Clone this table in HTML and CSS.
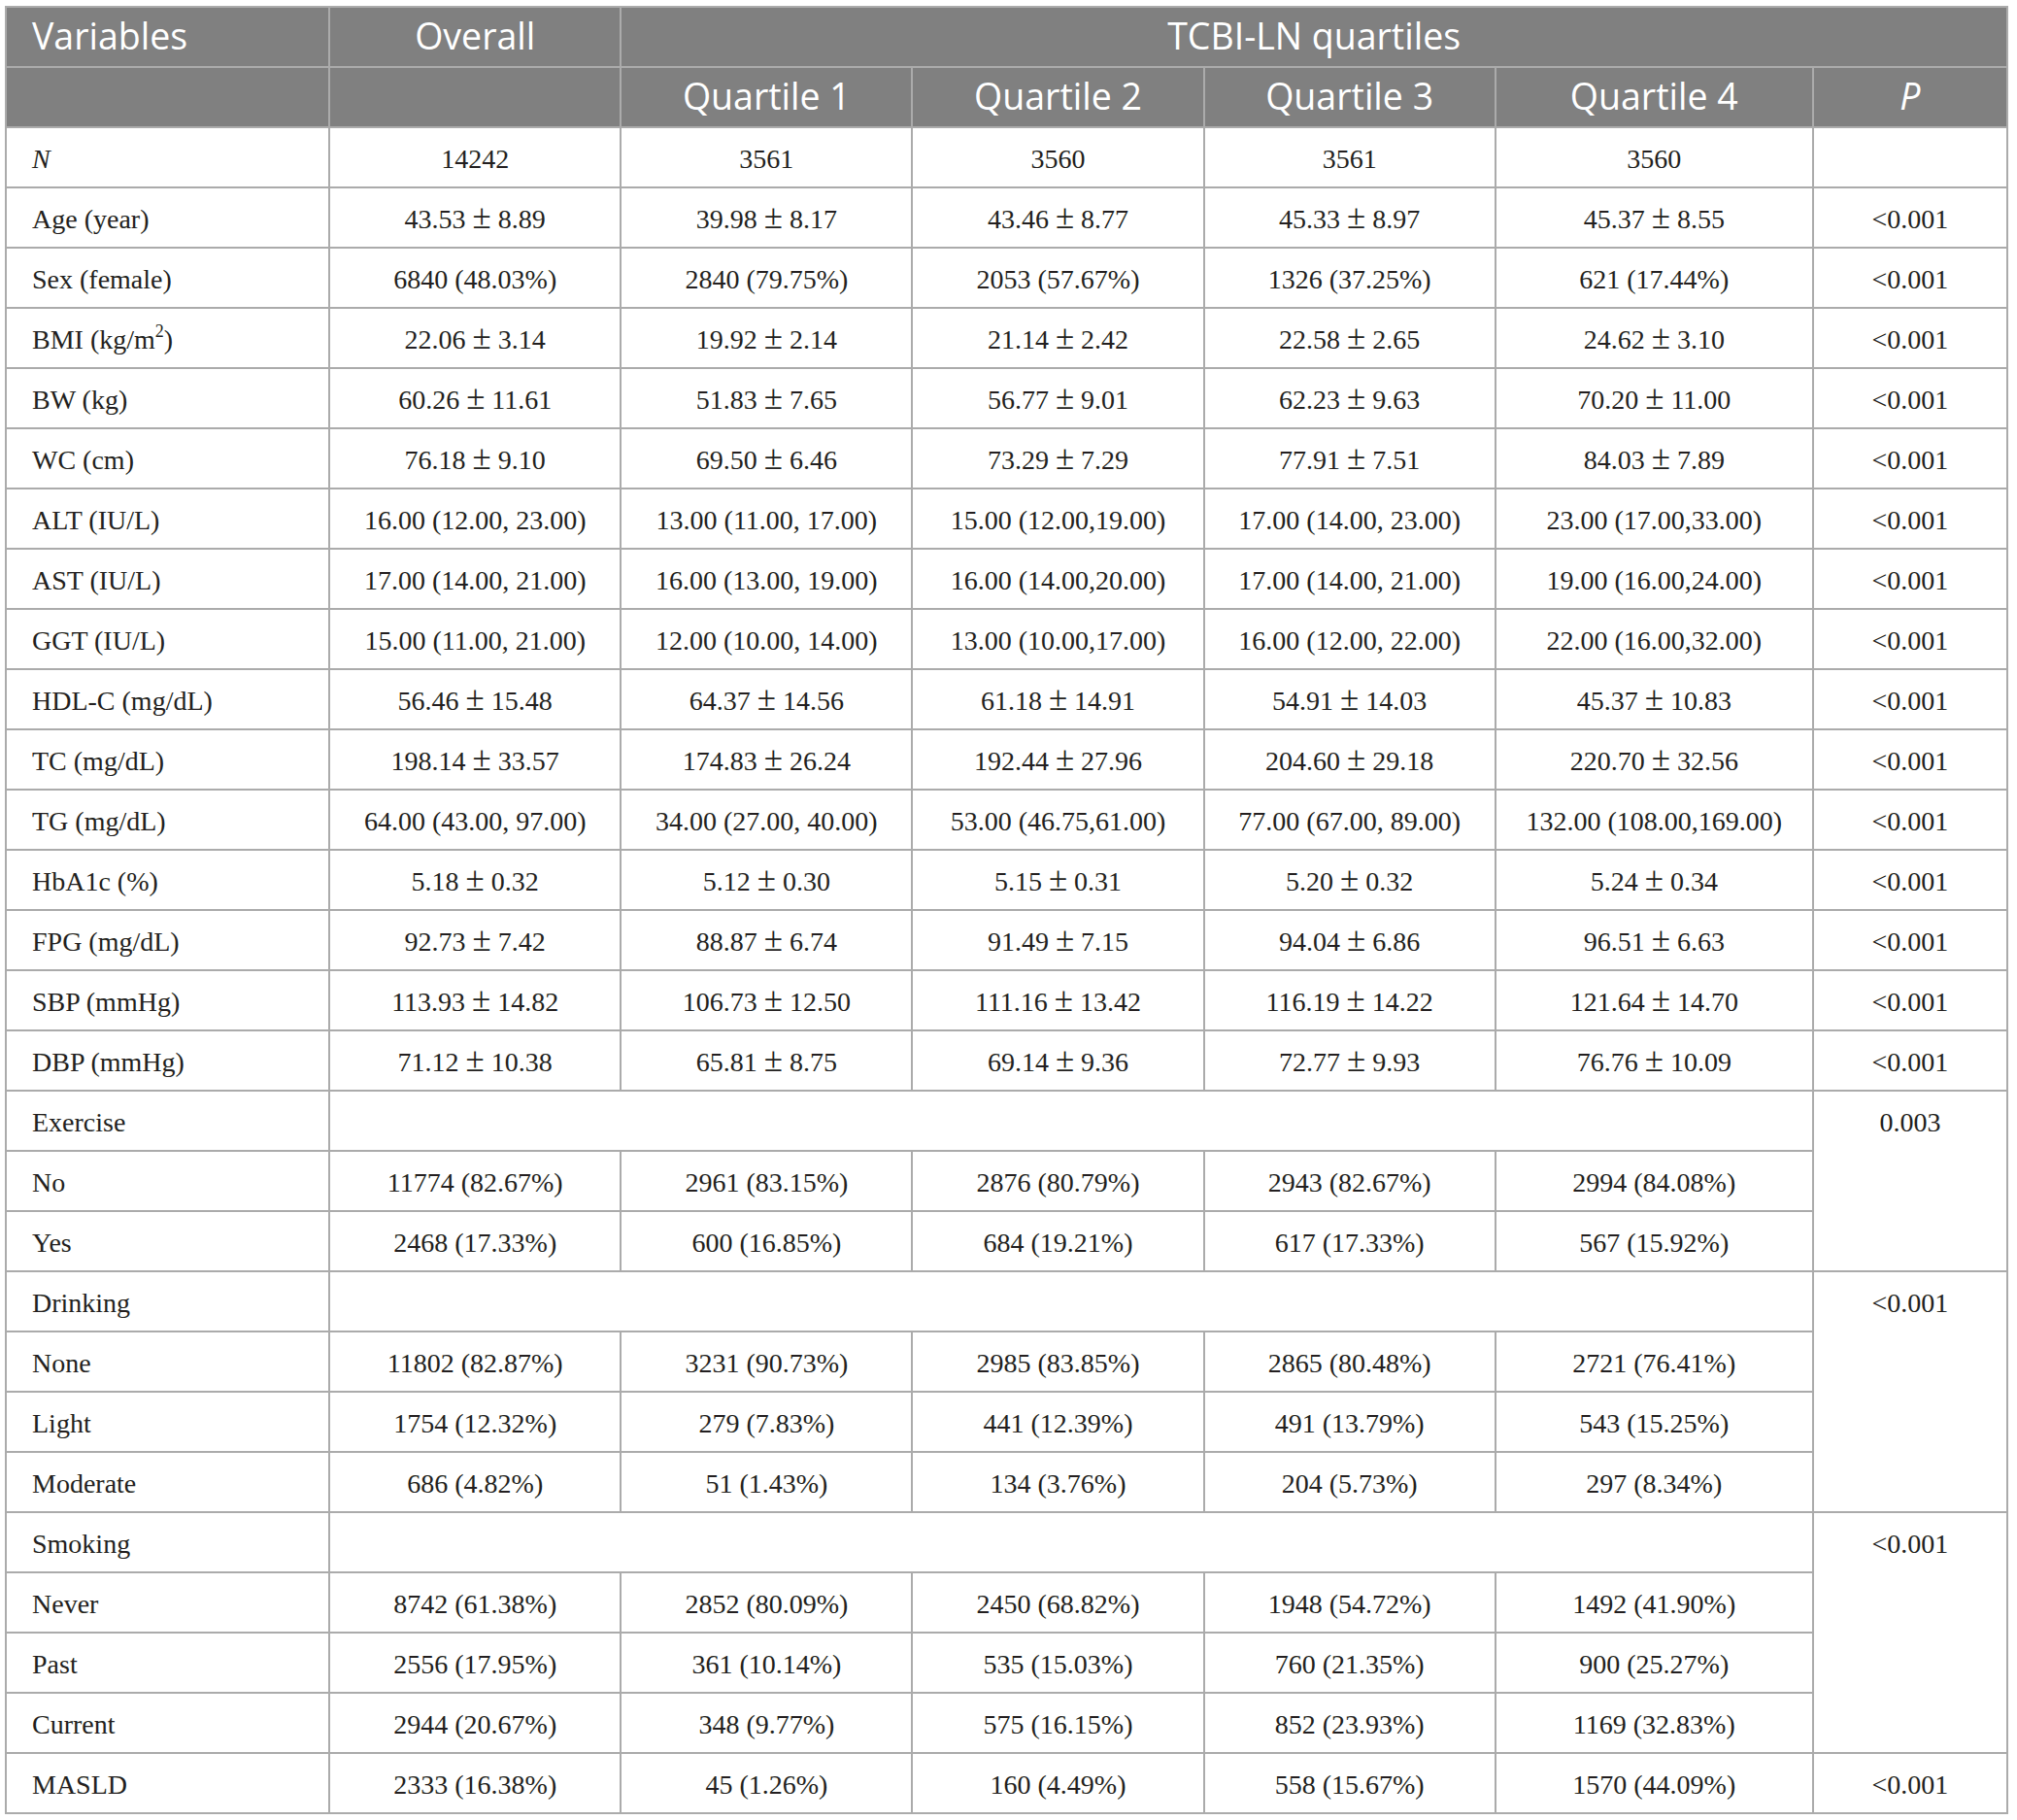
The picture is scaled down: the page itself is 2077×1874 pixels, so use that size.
FILE: index.html
```html
<!DOCTYPE html>
<html>
<head>
<meta charset="utf-8">
<link rel="stylesheet" href="styles.css">
</head>
<body>
<table class="tbl">
<colgroup>
<col class="c-var"><col class="c-q"><col class="c-q"><col class="c-q"><col class="c-q"><col class="c-q4"><col class="c-p">
</colgroup>
<thead>
<tr><th class="left">Variables</th><th>Overall</th><th colspan="5">TCBI-LN quartiles</th></tr>
<tr><th></th><th></th><th>Quartile 1</th><th>Quartile 2</th><th>Quartile 3</th><th>Quartile 4</th><th><i>P</i></th></tr>
</thead>
<tbody>
<tr><td class="left"><i>N</i></td><td>14242</td><td>3561</td><td>3560</td><td>3561</td><td>3560</td><td></td></tr>
<tr><td class="left">Age (year)</td><td>43.53 <span class="pm">±</span> 8.89</td><td>39.98 <span class="pm">±</span> 8.17</td><td>43.46 <span class="pm">±</span> 8.77</td><td>45.33 <span class="pm">±</span> 8.97</td><td>45.37 <span class="pm">±</span> 8.55</td><td>&lt;0.001</td></tr>
<tr><td class="left">Sex (female)</td><td>6840 (48.03%)</td><td>2840 (79.75%)</td><td>2053 (57.67%)</td><td>1326 (37.25%)</td><td>621 (17.44%)</td><td>&lt;0.001</td></tr>
<tr><td class="left">BMI (kg/m<sup>2</sup>)</td><td>22.06 <span class="pm">±</span> 3.14</td><td>19.92 <span class="pm">±</span> 2.14</td><td>21.14 <span class="pm">±</span> 2.42</td><td>22.58 <span class="pm">±</span> 2.65</td><td>24.62 <span class="pm">±</span> 3.10</td><td>&lt;0.001</td></tr>
<tr><td class="left">BW (kg)</td><td>60.26 <span class="pm">±</span> 11.61</td><td>51.83 <span class="pm">±</span> 7.65</td><td>56.77 <span class="pm">±</span> 9.01</td><td>62.23 <span class="pm">±</span> 9.63</td><td>70.20 <span class="pm">±</span> 11.00</td><td>&lt;0.001</td></tr>
<tr><td class="left">WC (cm)</td><td>76.18 <span class="pm">±</span> 9.10</td><td>69.50 <span class="pm">±</span> 6.46</td><td>73.29 <span class="pm">±</span> 7.29</td><td>77.91 <span class="pm">±</span> 7.51</td><td>84.03 <span class="pm">±</span> 7.89</td><td>&lt;0.001</td></tr>
<tr><td class="left">ALT (IU/L)</td><td>16.00 (12.00, 23.00)</td><td>13.00 (11.00, 17.00)</td><td>15.00 (12.00,19.00)</td><td>17.00 (14.00, 23.00)</td><td>23.00 (17.00,33.00)</td><td>&lt;0.001</td></tr>
<tr><td class="left">AST (IU/L)</td><td>17.00 (14.00, 21.00)</td><td>16.00 (13.00, 19.00)</td><td>16.00 (14.00,20.00)</td><td>17.00 (14.00, 21.00)</td><td>19.00 (16.00,24.00)</td><td>&lt;0.001</td></tr>
<tr><td class="left">GGT (IU/L)</td><td>15.00 (11.00, 21.00)</td><td>12.00 (10.00, 14.00)</td><td>13.00 (10.00,17.00)</td><td>16.00 (12.00, 22.00)</td><td>22.00 (16.00,32.00)</td><td>&lt;0.001</td></tr>
<tr><td class="left">HDL-C (mg/dL)</td><td>56.46 <span class="pm">±</span> 15.48</td><td>64.37 <span class="pm">±</span> 14.56</td><td>61.18 <span class="pm">±</span> 14.91</td><td>54.91 <span class="pm">±</span> 14.03</td><td>45.37 <span class="pm">±</span> 10.83</td><td>&lt;0.001</td></tr>
<tr><td class="left">TC (mg/dL)</td><td>198.14 <span class="pm">±</span> 33.57</td><td>174.83 <span class="pm">±</span> 26.24</td><td>192.44 <span class="pm">±</span> 27.96</td><td>204.60 <span class="pm">±</span> 29.18</td><td>220.70 <span class="pm">±</span> 32.56</td><td>&lt;0.001</td></tr>
<tr><td class="left">TG (mg/dL)</td><td>64.00 (43.00, 97.00)</td><td>34.00 (27.00, 40.00)</td><td>53.00 (46.75,61.00)</td><td>77.00 (67.00, 89.00)</td><td>132.00 (108.00,169.00)</td><td>&lt;0.001</td></tr>
<tr><td class="left">HbA1c (%)</td><td>5.18 <span class="pm">±</span> 0.32</td><td>5.12 <span class="pm">±</span> 0.30</td><td>5.15 <span class="pm">±</span> 0.31</td><td>5.20 <span class="pm">±</span> 0.32</td><td>5.24 <span class="pm">±</span> 0.34</td><td>&lt;0.001</td></tr>
<tr><td class="left">FPG (mg/dL)</td><td>92.73 <span class="pm">±</span> 7.42</td><td>88.87 <span class="pm">±</span> 6.74</td><td>91.49 <span class="pm">±</span> 7.15</td><td>94.04 <span class="pm">±</span> 6.86</td><td>96.51 <span class="pm">±</span> 6.63</td><td>&lt;0.001</td></tr>
<tr><td class="left">SBP (mmHg)</td><td>113.93 <span class="pm">±</span> 14.82</td><td>106.73 <span class="pm">±</span> 12.50</td><td>111.16 <span class="pm">±</span> 13.42</td><td>116.19 <span class="pm">±</span> 14.22</td><td>121.64 <span class="pm">±</span> 14.70</td><td>&lt;0.001</td></tr>
<tr><td class="left">DBP (mmHg)</td><td>71.12 <span class="pm">±</span> 10.38</td><td>65.81 <span class="pm">±</span> 8.75</td><td>69.14 <span class="pm">±</span> 9.36</td><td>72.77 <span class="pm">±</span> 9.93</td><td>76.76 <span class="pm">±</span> 10.09</td><td>&lt;0.001</td></tr>
<tr><td class="left">Exercise</td><td colspan="5"></td><td rowspan="3" class="top">0.003</td></tr>
<tr><td class="left">No</td><td>11774 (82.67%)</td><td>2961 (83.15%)</td><td>2876 (80.79%)</td><td>2943 (82.67%)</td><td>2994 (84.08%)</td></tr>
<tr><td class="left">Yes</td><td>2468 (17.33%)</td><td>600 (16.85%)</td><td>684 (19.21%)</td><td>617 (17.33%)</td><td>567 (15.92%)</td></tr>
<tr><td class="left">Drinking</td><td colspan="5"></td><td rowspan="4" class="top">&lt;0.001</td></tr>
<tr><td class="left">None</td><td>11802 (82.87%)</td><td>3231 (90.73%)</td><td>2985 (83.85%)</td><td>2865 (80.48%)</td><td>2721 (76.41%)</td></tr>
<tr><td class="left">Light</td><td>1754 (12.32%)</td><td>279 (7.83%)</td><td>441 (12.39%)</td><td>491 (13.79%)</td><td>543 (15.25%)</td></tr>
<tr><td class="left">Moderate</td><td>686 (4.82%)</td><td>51 (1.43%)</td><td>134 (3.76%)</td><td>204 (5.73%)</td><td>297 (8.34%)</td></tr>
<tr><td class="left">Smoking</td><td colspan="5"></td><td rowspan="4" class="top">&lt;0.001</td></tr>
<tr><td class="left">Never</td><td>8742 (61.38%)</td><td>2852 (80.09%)</td><td>2450 (68.82%)</td><td>1948 (54.72%)</td><td>1492 (41.90%)</td></tr>
<tr><td class="left">Past</td><td>2556 (17.95%)</td><td>361 (10.14%)</td><td>535 (15.03%)</td><td>760 (21.35%)</td><td>900 (25.27%)</td></tr>
<tr><td class="left">Current</td><td>2944 (20.67%)</td><td>348 (9.77%)</td><td>575 (16.15%)</td><td>852 (23.93%)</td><td>1169 (32.83%)</td></tr>
<tr><td class="left">MASLD</td><td>2333 (16.38%)</td><td>45 (1.26%)</td><td>160 (4.49%)</td><td>558 (15.67%)</td><td>1570 (44.09%)</td><td>&lt;0.001</td></tr>
</tbody>
</table>
</body>
</html>
```
FILE: styles.css
```css
html, body {
  margin: 0;
  padding: 0;
  background: #ffffff;
}
body {
  padding: 6px 0 0 5px;
}
.tbl {
  border-collapse: collapse;
  table-layout: fixed;
  width: 2063px;
  border: 2px solid #ababab;
}
.c-var { width: 333px; }
.c-q { width: 300px; }
.c-q4 { width: 327px; }
.c-p { width: 200px; }
.tbl th, .tbl td {
  border: 2px solid #ababab;
  padding: 0;
  height: 60px;
  line-height: 60px;
  text-align: center;
  vertical-align: top;
  white-space: nowrap;
  overflow: hidden;
}
.tbl th {
  background: #808080;
  color: #ffffff;
  font-family: "Open Sans", "Noto Sans", sans-serif;
  font-weight: 400;
  font-size: 37.5px;
  height: 60px;
  line-height: 58px;
}
.tbl td {
  font-family: "Liberation Serif", "Times New Roman", serif;
  font-size: 28px;
  color: #231f20;
  padding-top: 3px;
  height: 57px;
  line-height: 57px;
}
.tbl .left {
  text-align: left;
  padding-left: 26px;
}
.tbl .pm {
  font-size: 1.25em;
  line-height: 0;
}
.tbl sup {
  line-height: 0;
  font-size: 18px;
  vertical-align: 12px;
}
```
